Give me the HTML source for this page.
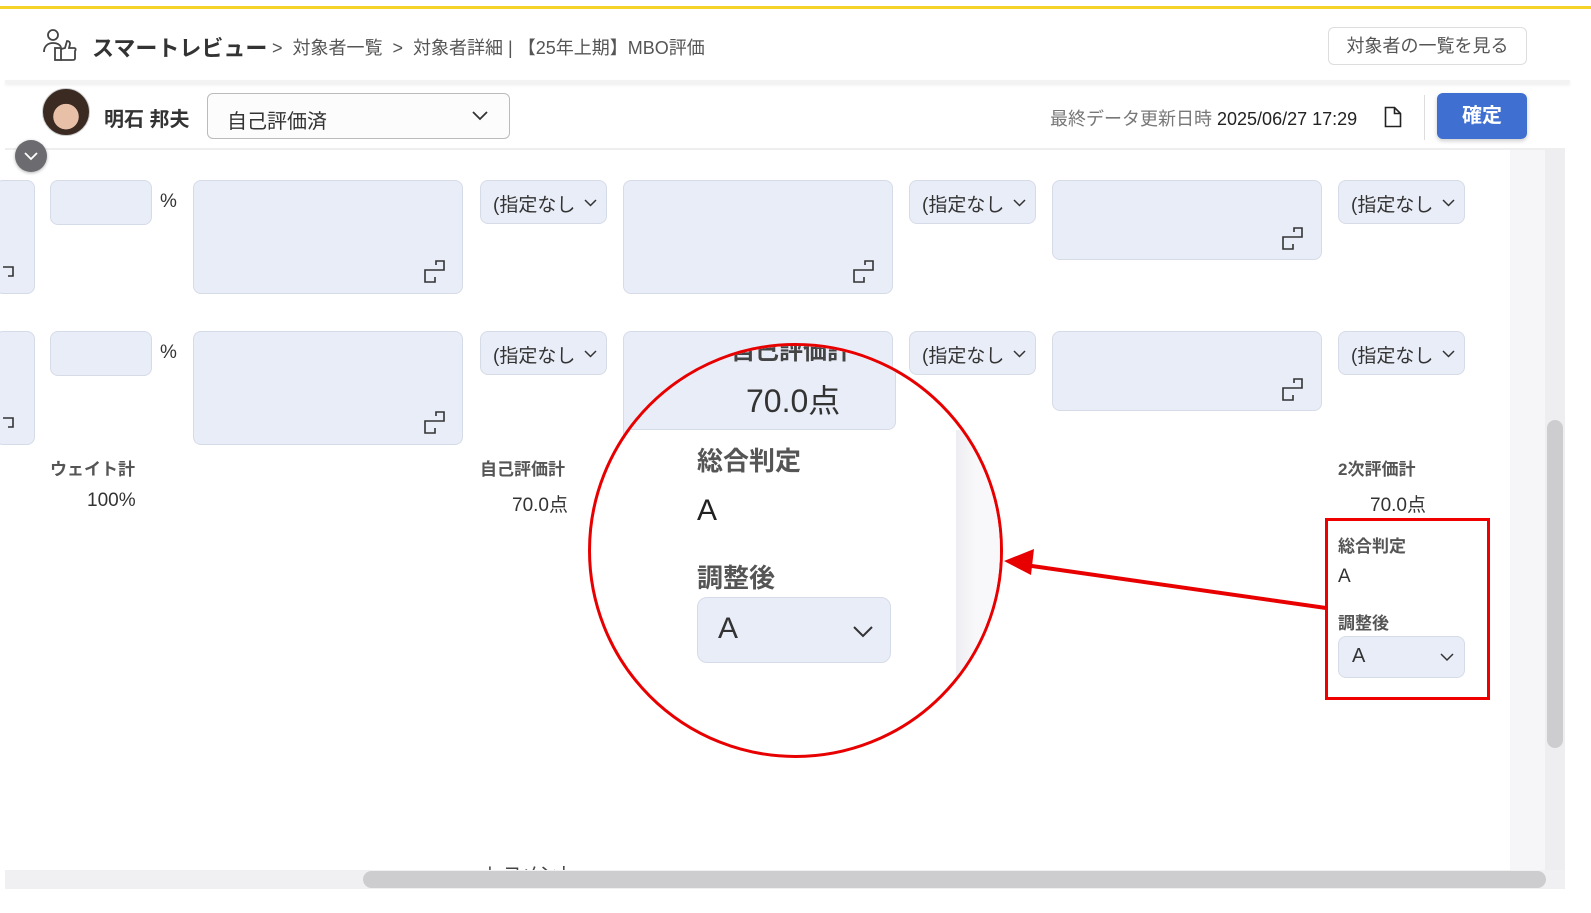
<!DOCTYPE html>
<html><head><meta charset="utf-8"><style>
*{box-sizing:border-box;margin:0;padding:0}
body{width:1591px;height:913px;position:relative;overflow:hidden;background:#fff;font-family:"Liberation Sans","Noto Sans CJK JP",sans-serif;color:#333}
.a{position:absolute}
.f{position:absolute;background:#e9edf8;border:1px solid #d6dbe8;border-radius:8px}
.dd{position:absolute;background:#e9edf8;border:1px solid #d6dbe8;border-radius:8px;font-size:19px;color:#333;padding:9px 0 0 12px;height:44px;width:127px}
.dd svg{position:absolute;right:9px;top:18px}
.lb{position:absolute;font-size:17px;font-weight:bold;color:#555}
.v{position:absolute;font-size:19px;color:#333}
</style></head><body>
<div class="a" style="left:0;top:6px;width:1591px;height:3px;background:#f5d328"></div>
<div class="a" style="left:5px;top:80px;width:1565px;height:3px;box-shadow:0 2px 3px rgba(0,0,0,.08);background:#f3f3f3"></div>
<svg class="a" style="left:42px;top:28px" width="36" height="34" viewBox="0 0 36 34" fill="none" stroke="#444" stroke-width="1.8"><circle cx="11" cy="7" r="5"/><path d="M2 24c0-6 4-9 9-9s7 2 8 4"/><rect x="13" y="20" width="6" height="12"/><path d="M19 21l4-1 2-7c2 0 3 1 3 3l-1 4h5c2 0 2 2 1 3v7c0 2-1 2-3 2H19"/></svg>
<div class="a" style="left:92px;top:31px;font-size:22px;font-weight:bold;color:#333">スマートレビュー</div>
<div class="a" style="left:272px;top:34px;font-size:18px;color:#555">&gt;&nbsp; 対象者一覧 &nbsp;&gt;&nbsp; 対象者詳細 | 【25年上期】MBO評価</div>
<div class="a" style="left:1328px;top:27px;width:199px;height:38px;border:1px solid #ddd;border-radius:6px;font-size:18px;color:#555;text-align:center;line-height:36px">対象者の一覧を見る</div>
<div class="a" style="left:5px;top:148px;width:1560px;height:2px;background:#eee"></div>
<div class="a" style="left:42px;top:88px;width:48px;height:48px;border-radius:50%;background:radial-gradient(circle at 50% 60%,#e8c0a8 0 35%,#3a2a22 36%);border:1px solid #ccc"></div>
<div class="a" style="left:104px;top:103px;font-size:20px;font-weight:bold;color:#333">明石 邦夫</div>
<div class="a" style="left:207px;top:93px;width:303px;height:46px;border:1px solid #bbb;border-radius:6px;background:#fcfcfd;font-size:20px;padding:11px 0 0 19px">自己評価済<svg style="position:absolute;right:20px;top:16px" width="18" height="12"><path d="M2 2l7 7 7-7" stroke="#333" stroke-width="1.8" fill="none"/></svg></div>
<div class="a" style="left:1050px;top:105px;font-size:18px;color:#777">最終データ更新日時 <span style="color:#222">2025/06/27 17:29</span></div>
<svg class="a" style="left:1384px;top:106px" width="18" height="22"><path d="M1.5 1.5h9l6 6v13h-15z M10.5 1.5v6h6" stroke="#222" stroke-width="1.6" fill="none"/></svg>
<div class="a" style="left:1424px;top:95px;width:1px;height:45px;background:#ddd"></div>
<div class="a" style="left:1437px;top:93px;width:90px;height:46px;background:#3f6fd0;border-radius:6px;color:#fff;font-weight:bold;font-size:20px;text-align:center;line-height:46px;box-shadow:0 2px 4px rgba(0,0,0,.2)">確定</div>
<div class="a" style="left:15px;top:140px;width:32px;height:32px;border-radius:50%;background:#6b6b70;box-shadow:0 1px 3px rgba(0,0,0,.3)"><svg style="position:absolute;left:8px;top:11px" width="16" height="10"><path d="M2 2l6 6 6-6" stroke="#fff" stroke-width="1.8" fill="none"/></svg></div>

<div class="a" style="left:1510px;top:150px;width:36px;height:720px;background:#f6f6f8"></div>
<div class="a" style="left:1545px;top:150px;width:20px;height:720px;background:#eeeef0"></div>
<div class="a" style="left:1547px;top:420px;width:16px;height:328px;border-radius:8px;background:#cdcdd0"></div>

<div class="f" style="left:-5px;top:180px;width:40px;height:114px"></div>
<div class="f" style="left:50px;top:180px;width:102px;height:45px"></div>
<div class="v" style="left:160px;top:191px">%</div>
<div class="f" style="left:193px;top:180px;width:270px;height:114px"></div>
<div class="dd" style="left:480px;top:180px">(指定なし<svg width="13" height="8"><path d="M1 1l5.5 5.5 5.5-5.5" stroke="#333" stroke-width="1.5" fill="none"/></svg></div>
<div class="f" style="left:623px;top:180px;width:270px;height:114px"></div>
<div class="dd" style="left:909px;top:180px">(指定なし<svg width="13" height="8"><path d="M1 1l5.5 5.5 5.5-5.5" stroke="#333" stroke-width="1.5" fill="none"/></svg></div>
<div class="f" style="left:1052px;top:180px;width:270px;height:80px"></div>
<div class="dd" style="left:1338px;top:180px">(指定なし<svg width="13" height="8"><path d="M1 1l5.5 5.5 5.5-5.5" stroke="#333" stroke-width="1.5" fill="none"/></svg></div>

<div class="f" style="left:-5px;top:331px;width:40px;height:114px"></div>
<div class="f" style="left:50px;top:331px;width:102px;height:45px"></div>
<div class="v" style="left:160px;top:342px">%</div>
<div class="f" style="left:193px;top:331px;width:270px;height:114px"></div>
<div class="dd" style="left:480px;top:331px">(指定なし<svg width="13" height="8"><path d="M1 1l5.5 5.5 5.5-5.5" stroke="#333" stroke-width="1.5" fill="none"/></svg></div>
<div class="f" style="left:623px;top:331px;width:270px;height:114px"></div>
<div class="dd" style="left:909px;top:331px">(指定なし<svg width="13" height="8"><path d="M1 1l5.5 5.5 5.5-5.5" stroke="#333" stroke-width="1.5" fill="none"/></svg></div>
<div class="f" style="left:1052px;top:331px;width:270px;height:80px"></div>
<div class="dd" style="left:1338px;top:331px">(指定なし<svg width="13" height="8"><path d="M1 1l5.5 5.5 5.5-5.5" stroke="#333" stroke-width="1.5" fill="none"/></svg></div>

<svg class="a" style="left:0;top:0" width="1591" height="913" fill="none" stroke="#333" stroke-width="1.6">
<path d="M431 270h13v-9h-8v4 M431 270h-6v12h10v-5"/>
<path d="M860 270h13v-9h-8v4 M860 270h-6v12h10v-5"/>
<path d="M1289 237h13v-9h-8v4 M1289 237h-6v12h10v-5"/>
<path d="M431 421h13v-9h-8v4 M431 421h-6v12h10v-5"/>
<path d="M1289 388h13v-9h-8v4 M1289 388h-6v12h10v-5"/>
<path d="M3 267h10v9h-5 M3 418h10v9h-5"/>
</svg>
<div class="lb" style="left:50px;top:455px">ウェイト計</div>
<div class="v" style="left:87px;top:490px">100%</div>
<div class="lb" style="left:480px;top:455px">自己評価計</div>
<div class="v" style="left:512px;top:490px">70.0点</div>
<div class="lb" style="left:1338px;top:455px">2次評価計</div>
<div class="v" style="left:1370px;top:490px">70.0点</div>
<div class="lb" style="left:1338px;top:532px">総合判定</div>
<div class="v" style="left:1338px;top:566px">A</div>
<div class="lb" style="left:1338px;top:609px">調整後</div>
<div class="a" style="left:1338px;top:636px;width:127px;height:42px;background:#e9edf8;border:1px solid #d6dbe8;border-radius:8px;font-size:20px;padding:8px 0 0 13px">A<svg style="position:absolute;right:10px;top:16px" width="14" height="9"><path d="M1 1l6 6 6-6" stroke="#333" stroke-width="1.5" fill="none"/></svg></div>
<div class="a" style="left:1325px;top:518px;width:165px;height:182px;border:3px solid #e00"></div>

<div class="a" style="left:588px;top:343px;width:415px;height:415px;border-radius:50%;overflow:hidden;background:#fff;border:3px solid #e80000">
 <div class="a" style="left:32px;top:-16px;width:273px;height:100px;background:#e9edf8;border:1px solid #d6dbe8;border-radius:8px"></div>
 <div class="a" style="left:365px;top:84px;width:60px;height:340px;background:linear-gradient(90deg,#eeeef2,#f8f8fa 20px)"></div>
 <div class="a" style="left:140px;top:-15px;font-size:24px;font-weight:bold;color:#444">自己評価計</div>
 <div class="a" style="left:155px;top:30px;font-size:32px;color:#333">70.0点</div>
 <div class="a" style="left:106px;top:95px;font-size:26px;font-weight:bold;color:#555">総合判定</div>
 <div class="a" style="left:106px;top:148px;font-size:30px;color:#222">A</div>
 <div class="a" style="left:106px;top:212px;font-size:26px;font-weight:bold;color:#555">調整後</div>
 <div class="a" style="left:106px;top:251px;width:194px;height:66px;background:#e9edf8;border:1px solid #d6dbe8;border-radius:10px;font-size:30px;padding:14px 0 0 20px">A<svg style="position:absolute;right:16px;top:27px" width="22" height="13"><path d="M2 2l9 9 9-9" stroke="#333" stroke-width="2" fill="none"/></svg></div>
</div>
<svg class="a" style="left:0;top:0" width="1591" height="913"><line x1="1326" y1="608" x2="1025" y2="565" stroke="#e80000" stroke-width="4"/><path d="M1004 561l30-12-3 26z" fill="#e80000"/></svg>

<div class="a" style="left:485px;top:860px;font-size:18px;color:#444">レコメント</div>
<div class="a" style="left:5px;top:870px;width:1560px;height:19px;background:#f0f0f2"></div>
<div class="a" style="left:363px;top:871px;width:1183px;height:17px;border-radius:9px;background:#cdcdd0"></div>
<div class="a" style="left:0;top:889px;width:1591px;height:24px;background:#fff"></div>
</body></html>
